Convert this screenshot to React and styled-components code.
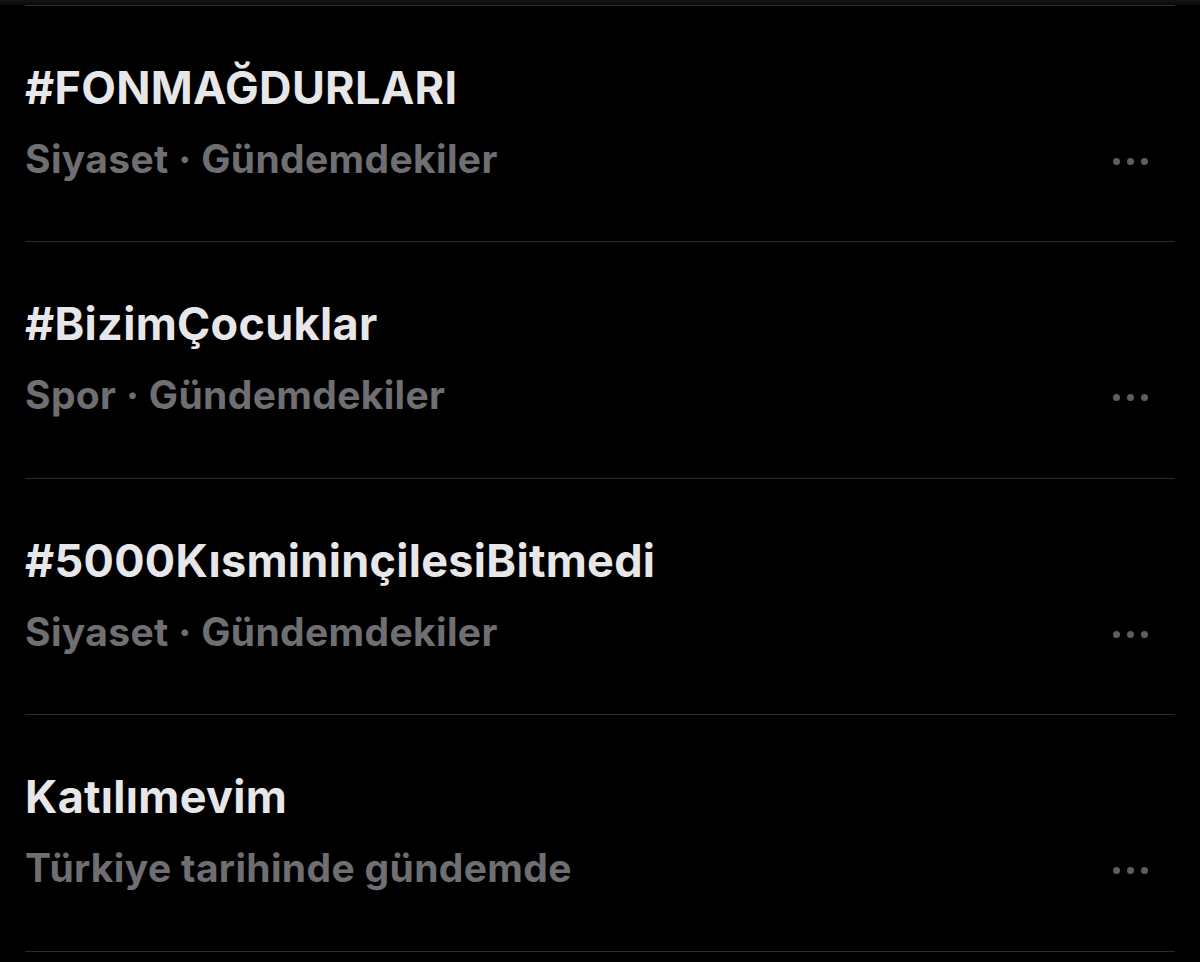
import React from "react";
import styled, { createGlobalStyle } from "styled-components";

const Global = createGlobalStyle`
  html, body { margin: 0; padding: 0; background: #000; }
  body { font-family: Inter, "Noto Sans", sans-serif; -webkit-font-smoothing: antialiased; }
`;

const Page = styled.div`
  width: 1200px;
  height: 962px;
  background: #000;
  overflow: hidden;
`;

const TopEdge = styled.div`
  height: 5px;
  background: linear-gradient(#141418, #0a0a0c);
`;

const List = styled.div`
  margin: 0 25px;
  border-top: 1px solid #2c2c30;
`;

const Row = styled.div`
  height: 236.4px;
  padding-top: 56px;
  box-sizing: border-box;
  border-bottom: 1px solid #2c2c30;
  display: flex;
  flex-direction: column;
`;

const Title = styled.div`
  font-size: 45px;
  line-height: 52px;
  font-weight: 700;
  color: #e7e7e9;
  letter-spacing: 0.3px;
`;

const MetaRow = styled.div`
  margin-top: 22px;
  display: flex;
  align-items: center;
  justify-content: space-between;
`;

const Meta = styled.div`
  font-size: 39px;
  line-height: 46px;
  font-weight: 700;
  color: #6f6f73;
  letter-spacing: 0.35px;
`;

const Dots = styled.div`
  display: flex;
  gap: 7px;
  margin-right: 27px;
  margin-top: 5px;
`;

const Dot = styled.span`
  width: 7px;
  height: 7px;
  border-radius: 50%;
  background: #5e5e62;
`;

const trends = [
  { title: "#FONMAĞDURLARI", meta: "Siyaset · Gündemdekiler" },
  { title: "#BizimÇocuklar", meta: "Spor · Gündemdekiler" },
  { title: "#5000KısmininçilesiBitmedi", meta: "Siyaset · Gündemdekiler" },
  { title: "Katılımevim", meta: "Türkiye tarihinde gündemde" },
];

export default function App() {
  return (
    <Page>
      <Global />
      <TopEdge />
      <List>
        {trends.map((t) => (
          <Row key={t.title}>
            <Title>{t.title}</Title>
            <MetaRow>
              <Meta>{t.meta}</Meta>
              <Dots>
                <Dot />
                <Dot />
                <Dot />
              </Dots>
            </MetaRow>
          </Row>
        ))}
      </List>
    </Page>
  );
}
